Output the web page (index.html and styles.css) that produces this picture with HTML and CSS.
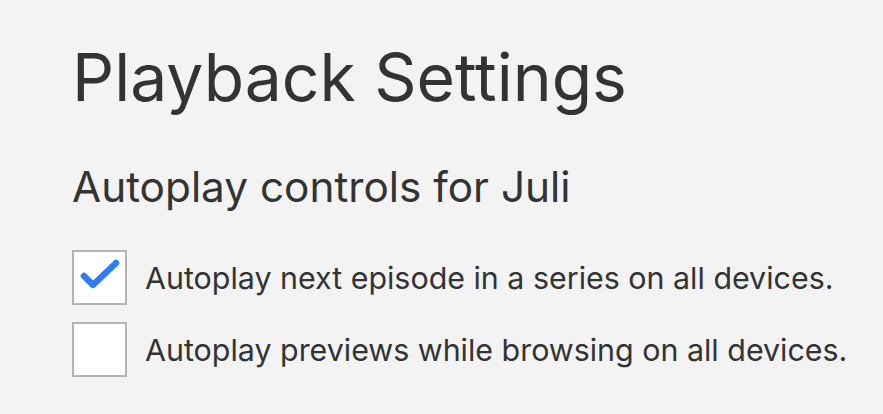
FILE: index.html
```html
<!DOCTYPE html>
<html>
<head>
<meta charset="utf-8">
<link rel="stylesheet" href="styles.css">
</head>
<body>
<main class="page">
  <h1 class="title">Playback Settings</h1>
  <h2 class="subtitle">Autoplay controls for Juli</h2>
  <div class="options">
    <label class="option">
      <span class="box checked">
        <svg viewBox="0 0 51 51" width="51" height="51" aria-hidden="true">
          <path d="M10 24 L19 33 L42 11" fill="none" stroke="#2f7df6" stroke-width="6.5" stroke-linecap="round" stroke-linejoin="round"/>
        </svg>
      </span>
      <span class="text">Autoplay next episode in a series on all devices.</span>
    </label>
    <label class="option">
      <span class="box"></span>
      <span class="text">Autoplay previews while browsing on all devices.</span>
    </label>
  </div>
</main>
</body>
</html>
```

FILE: styles.css
```css
html, body {
  margin: 0;
  padding: 0;
  background: #f3f3f3;
}
body {
  font-family: Inter, "Noto Sans", sans-serif;
  color: #333333;
}
.page {
  padding: 37px 0 0 72px;
}
.title {
  margin: 0;
  font-size: 66px;
  font-weight: 400;
  line-height: 80px;
}
.subtitle {
  margin: 45px 0 0 0;
  font-size: 42.3px;
  font-weight: 400;
  line-height: 50px;
}
.options {
  margin-top: 38px;
  display: flex;
  flex-direction: column;
  gap: 17px;
}
.option {
  display: flex;
  align-items: center;
  gap: 18px;
}
.box {
  box-sizing: border-box;
  width: 55px;
  height: 55px;
  border: 2px solid #b3b3b3;
  background: #ffffff;
  display: flex;
  align-items: center;
  justify-content: center;
  flex: none;
}
.box svg {
  display: block;
}
.text {
  font-size: 30.4px;
  line-height: 40px;
}
```
